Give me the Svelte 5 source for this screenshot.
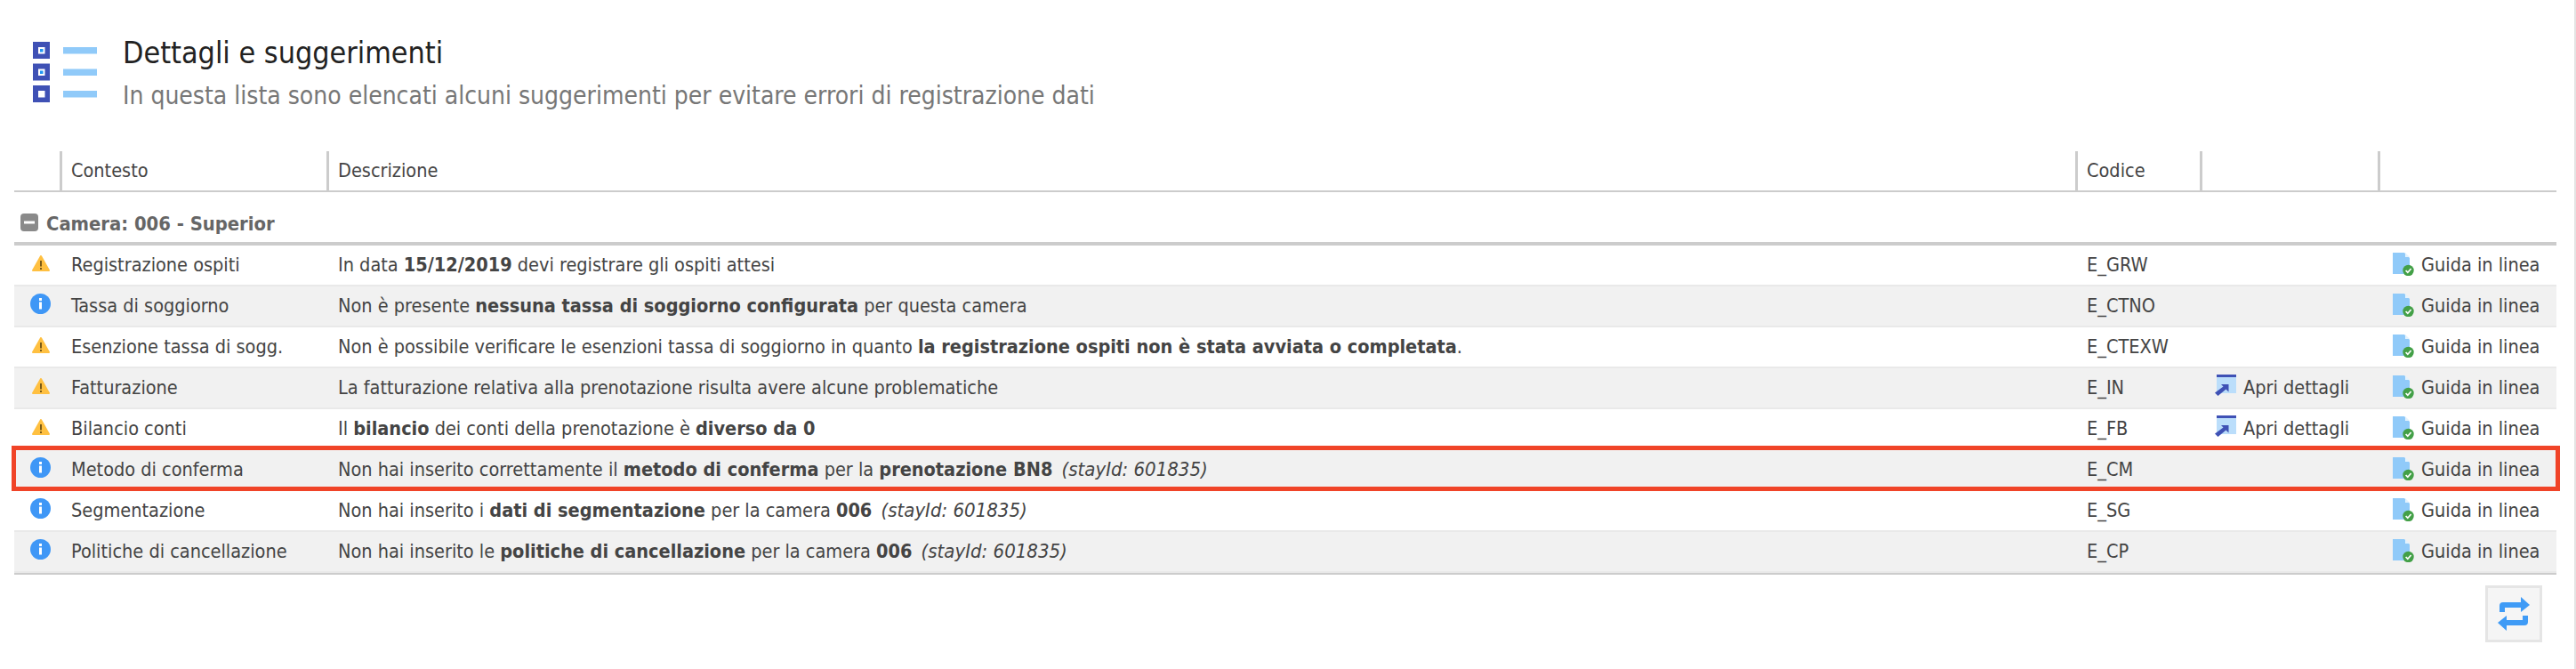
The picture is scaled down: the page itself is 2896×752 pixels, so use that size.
<script>
  const rows = [
    { k: 'w', c: 'Registrazione ospiti', d: 'In data <b>15/12/2019</b> devi registrare gli ospiti attesi', e: 'E_GRW' },
    { k: 'i', c: 'Tassa di soggiorno', d: 'Non è presente <b>nessuna tassa di soggiorno configurata</b> per questa camera', e: 'E_CTNO' },
    { k: 'w', c: 'Esenzione tassa di sogg.', d: 'Non è possibile verificare le esenzioni tassa di soggiorno in quanto <b>la registrazione ospiti non è stata avviata o completata</b>.', e: 'E_CTEXW' },
    { k: 'w', c: 'Fatturazione', d: 'La fatturazione relativa alla prenotazione risulta avere alcune problematiche', e: 'E_IN', open: true },
    { k: 'w', c: 'Bilancio conti', d: 'Il <b>bilancio</b> dei conti della prenotazione è <b>diverso da 0</b>', e: 'E_FB', open: true },
    { k: 'i', c: 'Metodo di conferma', d: 'Non hai inserito correttamente il <b>metodo di conferma</b> per la <b>prenotazione BN8</b> <i>(stayId: 601835)</i>', e: 'E_CM', mark: true },
    { k: 'i', c: 'Segmentazione', d: 'Non hai inserito i <b>dati di segmentazione</b> per la camera <b>006</b> <i>(stayId: 601835)</i>', e: 'E_SG' },
    { k: 'i', c: 'Politiche di cancellazione', d: 'Non hai inserito le <b>politiche di cancellazione</b> per la camera <b>006</b> <i>(stayId: 601835)</i>', e: 'E_CP' }
  ];
</script>

<div class="page">
  <header class="head">
    <svg class="logo" width="72" height="70" viewBox="0 0 72 70">
      {#each [0, 24.5, 49] as y, n}
        <rect x="0" y={y} width="19" height="19" fill="#3f51b5" />
        <rect x="6" y={y + 6} width="7.5" height="7.5" fill="#fff" />
        {#if n < 2}<rect x="8" y={y + 8} width="3.5" height="3.5" fill="#2196f3" />{/if}
        <rect x="34" y={y + 6} width="38" height="7.5" fill="#90caf9" />
      {/each}
    </svg>
    <div>
      <h1>Dettagli e suggerimenti</h1>
      <p>In questa lista sono elencati alcuni suggerimenti per evitare errori di registrazione dati</p>
    </div>
  </header>

  <div class="table">
    <div class="row th">
      <div></div><div class="cell">Contesto</div><div class="cell">Descrizione</div><div class="cell">Codice</div><div class="cell"></div><div class="cell"></div>
    </div>
    <div class="group">
      <svg width="20" height="20" viewBox="0 0 20 20"><rect width="20" height="20" rx="4" fill="#8a8a8a" /><rect x="4" y="8.5" width="12" height="3" fill="#fff" /></svg>
      <span>Camera: 006 - Superior</span>
    </div>
    {#each rows as r}
      <div class="row tr">
        <div class="ic">
          {#if r.k === 'w'}
            <svg width="20" height="18" viewBox="0 0 20 18"><path d="M10 1 19 17H1Z" fill="#ffc041" stroke="#ffc041" stroke-width="2" stroke-linejoin="round" /><rect x="9" y="6" width="2" height="6.5" fill="#7a5a16" /><rect x="9" y="14" width="2" height="2" fill="#7a5a16" /></svg>
          {:else}
            <svg width="23" height="23" viewBox="0 0 23 23"><circle cx="11.5" cy="11.5" r="11.5" fill="#3f97f6" /><rect x="10" y="5" width="3" height="3" fill="#fff" /><rect x="10" y="9.5" width="3" height="8" fill="#fff" /></svg>
          {/if}
        </div>
        <div class="cell">{r.c}</div>
        <div class="cell">{@html r.d}</div>
        <div class="cell">{r.e}</div>
        <div class="cell link">
          {#if r.open}
            <svg class="open" width="24" height="24" viewBox="0 0 24 24"><rect x="2" y="0" width="22" height="21" fill="#bbdefb" /><rect x="2" y="0" width="22" height="3" fill="#3f51b5" /><path d="M7 11H15.5V19.5L12.5 16.5 3.5 24 0 20.5 9.5 13.5Z" fill="#3f51b5" /></svg>
            <span>Apri dettagli</span>
          {/if}
        </div>
        <div class="cell link">
          <svg class="guide" width="24" height="26" viewBox="0 0 24 26"><path d="M0 0H13L19 6V24H0Z" fill="#90caf9" /><path d="M14 0 19 5H14Z" fill="#e3f2fd" /><circle cx="17.5" cy="20" r="6.2" fill="#43a047" /><path d="M14.6 20 16.8 22.2 20.6 18" fill="none" stroke="#fff" stroke-width="1.7" /></svg>
          <span>Guida in linea</span>
        </div>
      </div>
    {/each}
    <div class="mark"></div>
  </div>

  <div class="foot">
    <button aria-label="Aggiorna">
      <svg width="36" height="38" viewBox="0 0 36 38"><path d="M2 17V10Q2 6 6 6H26V0L36 9 26 17V12H8V17Z" fill="#3f9bf6" /><path d="M34 21V28Q34 32 30 32H10V38L0 29 10 21V26H28V21Z" fill="#3f9bf6" /></svg>
    </button>
  </div>
</div>

<style>
  :global(body) { margin: 0; background: #fff; }
  .page {
    width: 2896px; height: 752px; box-sizing: border-box; position: relative;
    border-right: 2px solid #e4e4e4;
    padding: 47px 20px 0 16px;
    font-family: "DejaVu Sans", sans-serif; font-stretch: condensed; font-size: 21.5px; color: #444;
  }
  .head { display: flex; margin-left: 21px; height: 123px; }
  .logo { margin-right: 29px; flex: none; }
  h1 { margin: -7px 0 0; font-size: 33.8px; line-height: 40px; font-weight: 400; color: #222; }
  p { margin: 10px 0 0; font-size: 28px; line-height: 36px; color: #777; }
  .table { position: relative; border-bottom: 2px solid #ccc; }
  .row { display: grid; grid-template-columns: 51px 300px 1966px 140px 200px 201px; }
  .th { height: 44px; border-bottom: 2px solid #ccc; line-height: 44px; }
  .th .cell { border-left: 3px solid #ccc; padding-left: 10px; }
  .th .cell:empty { height: 44px; }
  .group { height: 44px; border-bottom: 4px solid #ccc; display: flex; align-items: center; gap: 9px; padding: 12px 0 0 7px; font-weight: 700; color: #666; }
  .group span { position: relative; top: 1px; font-size: 21.8px; }
  .tr { height: 44px; border-bottom: 2px solid #e9e9e9; line-height: 44px; }
  .tr:nth-child(2n+4) { background: #f1f1f1; }
  .tr .cell { padding-left: 13px; white-space: nowrap; }
  .cell :global(i) { font-size: 22px; padding-left: 4px; }
  .ic { display: flex; align-items: center; justify-content: center; padding: 0 0 5px 8px; }
  .link { display: flex; align-items: center; }
  .open { margin: -6px 8px 0 4px; }
  .guide { margin: -2px 8px 0 0; }
  .tr .cell.link:last-child { padding-left: 17px; }
  .mark { position: absolute; left: -3px; top: 331px; width: 2865px; height: 51px; box-sizing: border-box; border: 5px solid #f04428; }
  .foot { display: flex; justify-content: flex-end; padding: 12px 16px 0 0; }
  button { width: 64px; height: 64px; box-sizing: border-box; padding: 0; border: 3px solid #e5e5e5; background: #f5f5f5; display: flex; align-items: center; justify-content: center; }
</style>
